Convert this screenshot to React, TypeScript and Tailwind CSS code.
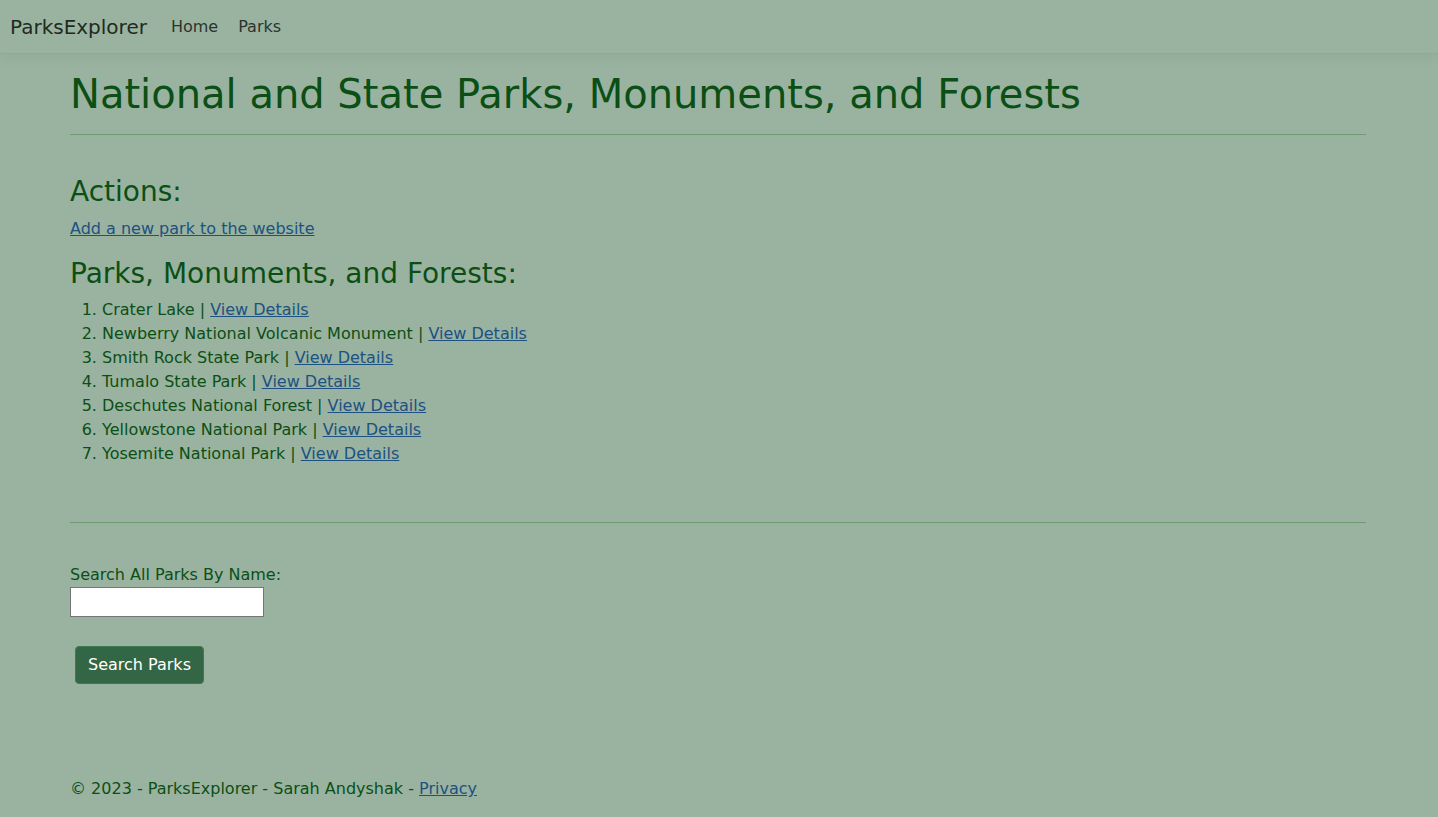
const parks = [
  "Crater Lake",
  "Newberry National Volcanic Monument",
  "Smith Rock State Park",
  "Tumalo State Park",
  "Deschutes National Forest",
  "Yellowstone National Park",
  "Yosemite National Park",
];

const NavBar = () => {
  return (
    <nav className="flex h-[54px] items-center border-b border-[#8fa995] bg-[#9ab3a0] px-[10px] shadow-[0_4px_12px_rgba(0,0,0,0.05)]">
      <a href="#" className="mr-[16px] text-[20px] text-[#1f2a22] no-underline">
        ParksExplorer
      </a>
      <ul className="flex">
        <li>
          <a href="#" className="px-[8px] text-[16px] text-[#2a352d]">
            Home
          </a>
        </li>
        <li className="ml-[4px]">
          <a href="#" className="px-[8px] text-[16px] text-[#2a352d]">
            Parks
          </a>
        </li>
      </ul>
    </nav>
  );
};

export default function App() {
  return (
    <div className="min-h-[817px] bg-[#9ab3a0] font-['DejaVu_Sans',sans-serif] text-[#0b4f14]">
      <NavBar />
      <main className="pt-[16px] pl-[70px] pr-[72px]">
        <h1 className="mb-[8px] text-[40px] leading-[1.2]">
          National and State Parks, Monuments, and Forests
        </h1>
        <hr className="my-[16px] border-t border-[#6f9a74]" />

        <h3 className="mt-[40px] mb-[8px] text-[28px] leading-[1.2]">Actions:</h3>
        <p className="mb-[16px] text-[16px] leading-[24px]">
          <a href="#" className="text-[#1c5182] underline">
            Add a new park to the website
          </a>
        </p>

        <h3 className="mb-[8px] text-[28px] leading-[1.2]">Parks, Monuments, and Forests:</h3>
        <ol className="mb-[16px] list-decimal pl-[32px] text-[16px] leading-[24px]">
          {parks.map((park) => (
            <li key={park}>
              {park} |{" "}
              <a href="#" className="text-[#1c5182] underline">
                View Details
              </a>
            </li>
          ))}
        </ol>

        <hr className="mt-[56px] mb-[40px] border-t border-[#6f9a74]" />

        <form onSubmit={(e) => e.preventDefault()}>
          <label className="block text-[16px] leading-[24px]">Search All Parks By Name:</label>
          <input
            type="text"
            className="block h-[30px] w-[194px] border border-[#767676] bg-white px-[4px]"
          />
          <button
            type="submit"
            className="mt-[29px] ml-[5px] h-[38px] rounded-[4px] border border-[#3e7a50] bg-[#336644] px-[12px] text-[16px] text-white"
          >
            Search Parks
          </button>
        </form>

        <footer className="mt-[93px] text-[16px] leading-[24px]">
          © 2023 - ParksExplorer - Sarah Andyshak -{" "}
          <a href="#" className="text-[#1c5182] underline">
            Privacy
          </a>
        </footer>
      </main>
    </div>
  );
}
